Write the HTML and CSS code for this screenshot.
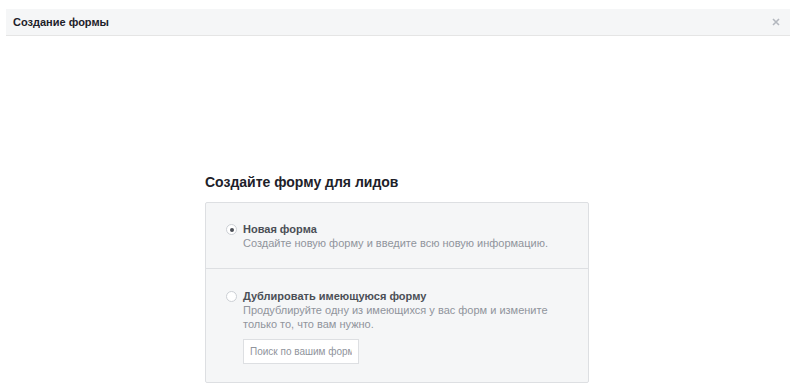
FILE: index.html
```html
<!DOCTYPE html>
<html lang="ru">
  <head>
    <meta charset="UTF-8" />
    <meta name="viewport" content="width=device-width, initial-scale=1.0" />
    <title>Создание формы</title>
    <link rel="stylesheet" href="styles.css">
  </head>
  <body>
    <div class="dialog">
      <!-- Top bar of the dialog -->
      <div class="dialog-header">
        <span class="dialog-title">Создание формы</span>
        <svg class="close" width="8" height="8" viewBox="0 0 8 8">
          <path d="M1 1L7 7M7 1L1 7" />
        </svg>
      </div>

      <div class="dialog-body">
        <h2 class="heading">Создайте форму для лидов</h2>

        <div class="choices">
          <label class="choice">
            <span class="radio checked"></span>
            <span class="choice-text">
              <span class="choice-title">Новая форма</span>
              <span class="choice-desc">Создайте новую форму и введите всю новую информацию.</span>
            </span>
          </label>

          <label class="choice">
            <span class="radio"></span>
            <span class="choice-text">
              <span class="choice-title">Дублировать имеющуюся форму</span>
              <span class="choice-desc">Продублируйте одну из имеющихся у вас форм и измените только то, что вам нужно.</span>
              <input type="text" class="search" placeholder="Поиск по вашим формам" />
            </span>
          </label>
        </div>
      </div>
    </div>
  </body>
</html>
```

FILE: styles.css
```css
body {
  margin: 0;
  padding: 9px 7px 0 6px;
  font-family: "Liberation Sans", Arial, sans-serif;
  background-color: #fff;
  color: #1d2129;
}
.dialog-header {
  display: flex;
  align-items: center;
  justify-content: space-between;
  height: 27px;
  padding: 0 9px 0 7px;
  background-color: #f5f6f7;
  border-bottom: 1px solid #e5e5e5;
  box-sizing: border-box;
}
.dialog-title {
  font-size: 11px;
  font-weight: bold;
  color: #1d2129;
}
.close {
  margin-right: 1px;
  stroke: #b4b8bf;
  stroke-width: 1.6;
  fill: none;
}
.dialog-body {
  width: 384px;
  margin-left: 199px;
  padding-top: 137px;
}
.heading {
  margin: 0 0 11px;
  font-size: 14px;
  font-weight: bold;
  line-height: 18px;
  color: #1d2129;
}
.choices {
  background-color: #f5f6f7;
  border: 1px solid #dddfe2;
  border-radius: 2px;
}
.choice {
  display: flex;
  align-items: flex-start;
  gap: 6px;
  padding: 19px 28px 18px 20px;
}
.choice + .choice {
  border-top: 1px solid #dddfe2;
  padding-top: 20px;
}
.radio {
  flex: none;
  width: 9px;
  height: 9px;
  margin-top: 2px;
  border: 1px solid #ccd0d5;
  border-radius: 50%;
  background: #fff;
  position: relative;
}
.radio.checked::after {
  content: "";
  position: absolute;
  left: 2.5px;
  top: 2.5px;
  width: 4px;
  height: 4px;
  border-radius: 50%;
  background: #4b4f56;
}
.choice-text {
  display: flex;
  flex-direction: column;
  align-items: flex-start;
  font-size: 11px;
  line-height: 14px;
}
.choice-title {
  font-weight: bold;
  color: #4b4f56;
}
.choice-desc {
  color: #90949c;
}
.search {
  margin-top: 8px;
  width: 116px;
  height: 25px;
  box-sizing: border-box;
  padding: 0 6px;
  border: 1px solid #dddfe2;
  background: #fff;
  font-family: inherit;
  font-size: 10px;
  color: #4b4f56;
}
.search::placeholder {
  color: #90949c;
}
```
